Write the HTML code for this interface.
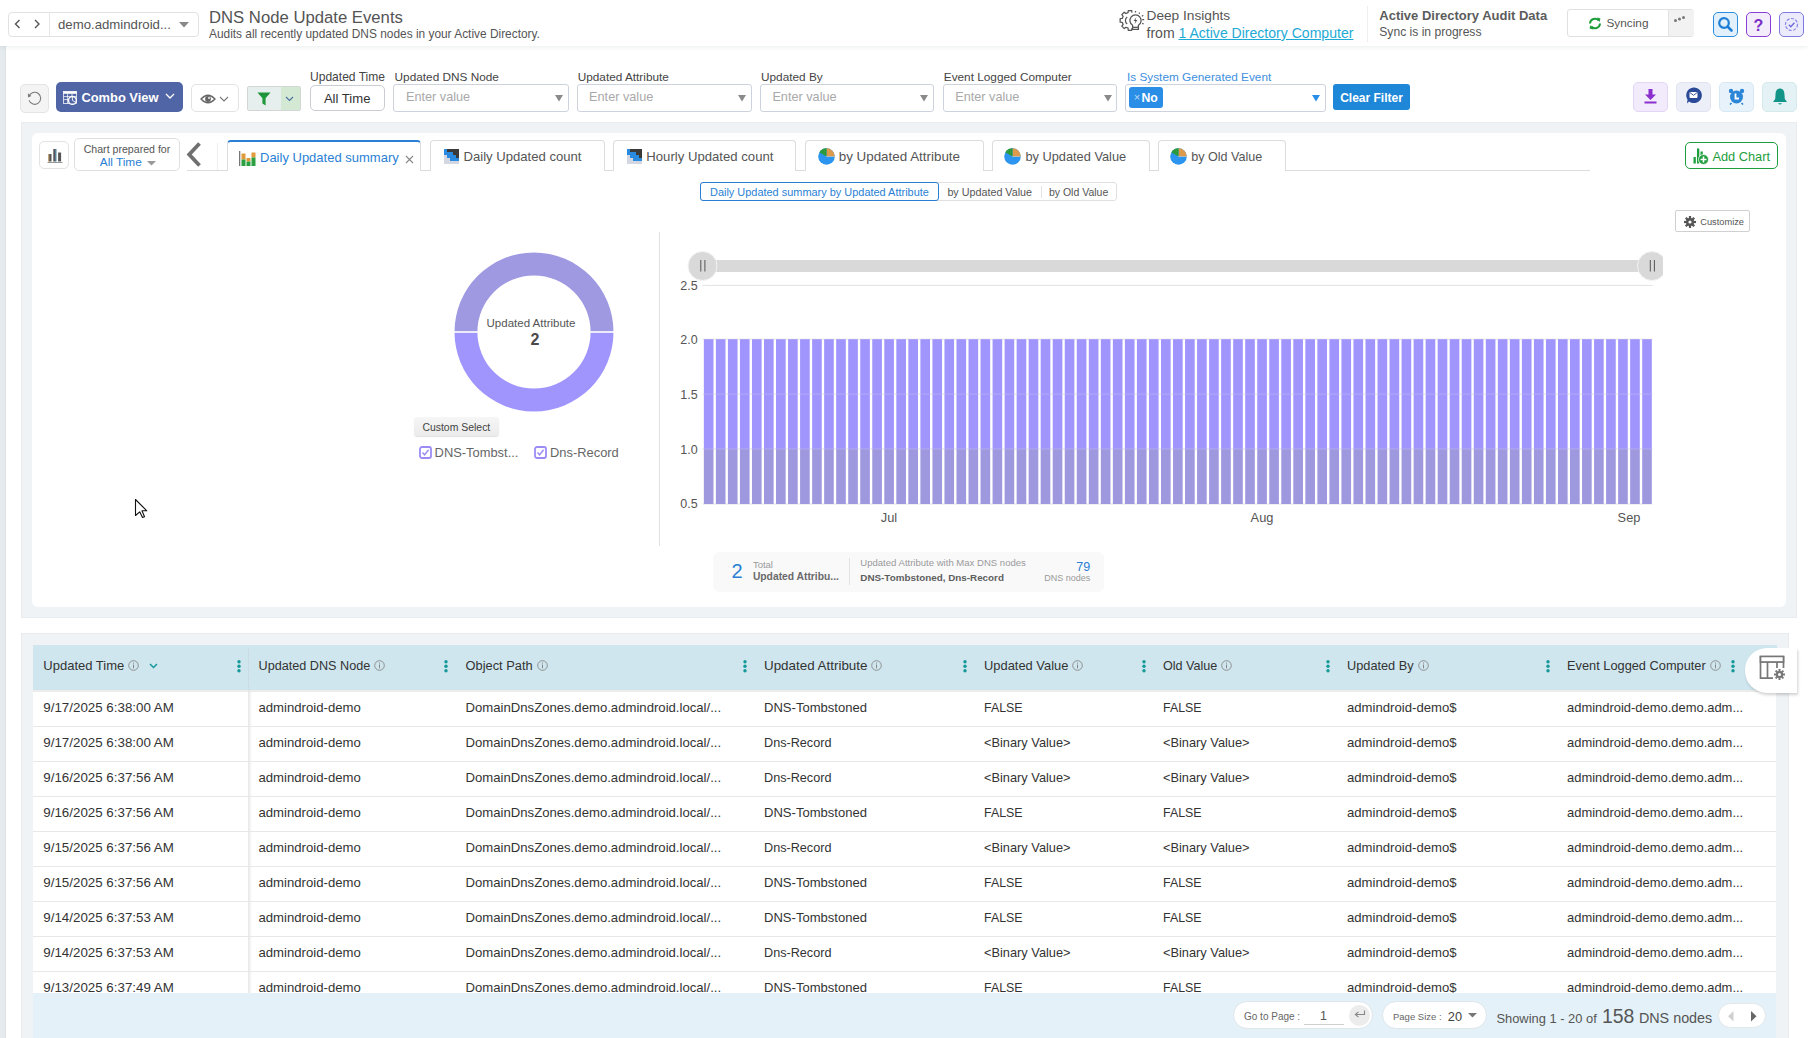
<!DOCTYPE html><html><head><meta charset="utf-8"><title>DNS Node Update Events</title><style>*{margin:0;padding:0}
html,body{width:1808px;height:1038px;overflow:hidden;background:#fff}
body{position:relative;font-family:"Liberation Sans",sans-serif}
.a{position:absolute}
.t{position:absolute;line-height:1;white-space:nowrap}
</style></head><body><div class="a" style="left:0.0px;top:0.0px;width:1808.0px;height:46.0px;background:#fff;box-shadow:0 1px 4px rgba(40,70,80,0.10);z-index:2"></div>
<div style="position:absolute;left:0;top:0;width:1808px;height:46px;z-index:3">
<div class="a" style="left:7.5px;top:11.5px;width:191.0px;height:25.0px;border:1px solid #e2e2e2;border-radius:4px;box-sizing:border-box"></div>
<div class="a" style="left:48.5px;top:12.0px;width:1.0px;height:24.0px;background:#e6e6e6"></div>
<svg class="a" style="left:13.0px;top:18.0px;" width="10" height="12" viewBox="0 0 10 12"><path d="M6.5 2 L2.5 6 L6.5 10" fill="none" stroke="#555" stroke-width="1.4"/></svg>
<svg class="a" style="left:32.0px;top:18.0px;" width="10" height="12" viewBox="0 0 10 12"><path d="M3 2 L7 6 L3 10" fill="none" stroke="#555" stroke-width="1.4"/></svg>
<div class="t" style="left:58.0px;top:18px;font-size:13.2px;color:#555;">demo.admindroid...</div>
<svg class="a" style="left:179.0px;top:22.0px;" width="10" height="6" viewBox="0 0 10 6"><path d="M0 0 L10 0 L5 5.5 Z" fill="#888"/></svg>
<div class="t" style="left:209.0px;top:10px;font-size:16.7px;color:#545454;">DNS Node Update Events</div>
<div class="t" style="left:209.0px;top:29px;font-size:11.9px;color:#555;">Audits all recently updated DNS nodes in your Active Directory.</div>
<svg class="a" style="left:1119.0px;top:9.0px;" width="27" height="23" viewBox="0 0 27 23"><g fill="none" stroke="#555" stroke-width="1.25" stroke-linejoin="round">
<path d="M12.94 3.64 L12.74 1.55 L9.26 1.55 L9.06 3.64 L6.88 4.54 L5.26 3.21 L2.81 5.66 L4.14 7.28 L3.24 9.46 L1.15 9.66 L1.15 13.14 L3.24 13.34 L4.14 15.52 L2.81 17.14 L5.26 19.59 L6.88 18.26 L9.06 19.16 L9.26 21.25 L12.74 21.25 L12.94 19.16"/>
<path d="M8.2 8 A4.3 4.3 0 0 0 8.2 15"/>
<path d="M13.6 16.2 A5.6 5.6 0 1 1 19.4 16.2 L19.4 20.4 H13.6 Z"/><path d="M13.6 18.3 H19.4"/>
<path d="M16.5 2 V3.6 M20.6 3.6 L20.1 4.8 M24.2 6.2 L23 7.2 M23.2 10.6 H25.2 M23.2 14.3 L24.6 14.8"/>
</g><path d="M17.4 8.2 L14.6 12 H16.4 L15.6 14.9 L18.4 11 H16.6 Z" fill="#555"/></svg>
<div class="t" style="left:1146.5px;top:9px;font-size:13.7px;color:#555;">Deep Insights</div>
<div class="t" style="left:1146.5px;top:26px;font-size:14.05px;color:#555;">from <span style="color:#1eaad6;text-decoration:underline;text-underline-offset:1px">1 Active Directory Computer</span></div>
<div class="a" style="left:1366.5px;top:6.0px;width:1.0px;height:36.0px;background:#eee"></div>
<div class="t" style="left:1379.3px;top:9px;font-size:13.0px;color:#5c5c5c;font-weight:700;">Active Directory Audit Data</div>
<div class="t" style="left:1379.3px;top:26px;font-size:12.1px;color:#555;">Sync is in progress</div>
<div class="a" style="left:1567.0px;top:9.0px;width:127.0px;height:28.0px;border:1px solid #e0e0e0;border-radius:3px;box-sizing:border-box"></div>
<div class="a" style="left:1668.0px;top:10.0px;width:25.0px;height:26.0px;background:#f2f2f2;border-left:1px solid #e3e3e3"></div>
<svg class="a" style="left:1673.0px;top:15.0px;" width="14" height="8" viewBox="0 0 14 8"><circle cx="2.5" cy="5.5" r="1.5" fill="#777"/><circle cx="6.5" cy="4" r="1.5" fill="#777"/><circle cx="10.5" cy="2.5" r="1.5" fill="#777"/></svg>
<svg class="a" style="left:1588.0px;top:16.5px;" width="14" height="13" viewBox="0 0 14 13"><g fill="none" stroke="#1e9e3a" stroke-width="2"><path d="M2 6.5 a5 5 0 0 1 8.8 -3"/><path d="M12 6.5 a5 5 0 0 1 -8.8 3"/></g><path d="M9 0.5 l3.5 1 l-1 3.5 z M5 12.5 l-3.5 -1 l1 -3.5 z" fill="#1e9e3a"/></svg>
<div class="t" style="left:1606.5px;top:18px;font-size:11.8px;color:#555;">Syncing</div>
<div class="a" style="left:1713.0px;top:12.0px;width:25.0px;height:25.0px;background:#e1f0fb;border:1px solid #2a8ee0;border-radius:5px;box-sizing:border-box"></div>
<svg class="a" style="left:1717.0px;top:16.0px;" width="17" height="17" viewBox="0 0 17 17"><circle cx="7" cy="7" r="4.8" fill="none" stroke="#1f7fd6" stroke-width="2.2"/><path d="M10.5 10.5 L14.5 14.5" stroke="#1f7fd6" stroke-width="2.6" stroke-linecap="round"/></svg>
<div class="a" style="left:1746.0px;top:12.0px;width:25.0px;height:25.0px;background:#f2ecfb;border:1px solid #8a3fd4;border-radius:5px;box-sizing:border-box"></div>
<div class="t" style="left:1458.5px;width:600px;text-align:center;top:18px;font-size:16px;color:#7b2fc6;font-weight:700;">?</div>
<div class="a" style="left:1779.0px;top:12.0px;width:25.0px;height:25.0px;background:#ecebfb;border:1px solid #7d7be0;border-radius:5px;box-sizing:border-box"></div>
<svg class="a" style="left:1783.0px;top:16.0px;" width="17" height="17" viewBox="0 0 17 17"><circle cx="8.5" cy="8.5" r="6" fill="none" stroke="#8a87e6" stroke-width="1.2" stroke-dasharray="3 1.5"/><path d="M5.8 8.8 l2 2 l3.6 -4" fill="none" stroke="#6b68d8" stroke-width="1.3"/></svg>
</div>
<div class="a" style="left:0.0px;top:46.0px;width:6.0px;height:992.0px;background:#e4eaed;border-right:1px solid #dde1e3;box-sizing:border-box"></div>
<div class="a" style="left:20.0px;top:84.0px;width:28.5px;height:29.0px;background:#f4f4f4;border:1px solid #e4e4e4;border-radius:5px;box-sizing:border-box"></div>
<svg class="a" style="left:27.0px;top:91.0px;" width="15" height="15" viewBox="0 0 15 15"><path d="M2.06 5.25 A6 6 0 1 1 2.06 9.35" fill="none" stroke="#7a7a7a" stroke-width="1.1"/><path d="M0.9 2.3 L4.4 4.9 L1.0 6.4 Z" fill="#7a7a7a"/></svg>
<div class="a" style="left:56.0px;top:82.0px;width:127.0px;height:30.0px;background:#5065a5;border-radius:5px"></div>
<svg class="a" style="left:62.5px;top:90.5px;" width="15" height="14" viewBox="0 0 15 14"><g fill="none" stroke="#fff" stroke-width="0.75"><rect x="0.6" y="0.6" width="12.8" height="11.8"/><path d="M0.6 5.6 H13.4 M0.6 8.6 H13.4 M4.6 3 V12.4 M9 3 V5.6"/></g><rect x="0.4" y="0.4" width="13.2" height="2.4" fill="#fff"/>
<circle cx="9.4" cy="9.4" r="3.9" fill="#5065a5" stroke="#fff" stroke-width="1.4"/><path d="M9.4 9.4 V5.5 M9.4 9.4 L12.6 11.3" stroke="#fff" stroke-width="0.9"/></svg>
<div class="t" style="left:81.4px;top:92px;font-size:12.9px;color:#fff;font-weight:700;">Combo View</div>
<svg class="a" style="left:164.5px;top:93.0px;" width="10" height="7" viewBox="0 0 10 7"><path d="M1 1 L5 5 L9 1" fill="none" stroke="#fff" stroke-width="1.3"/></svg>
<div class="a" style="left:191.0px;top:84.0px;width:48.0px;height:27.5px;background:#fff;border:1px solid #e3e3e3;border-radius:5px;box-sizing:border-box"></div>
<svg class="a" style="left:199.5px;top:94.0px;" width="16" height="10" viewBox="0 0 16 10"><path d="M1 5 Q8 -2.5 15 5 Q8 12.5 1 5 Z" fill="#fff" stroke="#666" stroke-width="1.3"/><circle cx="8" cy="5" r="2.9" fill="#666"/><circle cx="9" cy="4" r="0.9" fill="#fff"/></svg>
<svg class="a" style="left:219.0px;top:95.5px;" width="10" height="7" viewBox="0 0 10 7"><path d="M1 1 L5 5 L9 1" fill="none" stroke="#777" stroke-width="1.1"/></svg>
<div class="a" style="left:247.0px;top:86.0px;width:54.0px;height:24.5px;background:#e7eeee;border:1px solid #d2d6d4;border-radius:2px;box-sizing:border-box"></div>
<div class="a" style="left:280.5px;top:87.0px;width:19.5px;height:22.5px;background:#d4e9d4"></div>
<svg class="a" style="left:256.5px;top:91.5px;" width="14" height="14" viewBox="0 0 14 14"><path d="M0.5 0.5 H13.5 L8.6 6.3 V13.5 L5.4 11.5 V6.3 Z" fill="#1f9a3a"/><path d="M2.5 2.2 H11.5" stroke="#2d6a3a" stroke-width="0.8" stroke-dasharray="1 1"/></svg>
<svg class="a" style="left:285.0px;top:95.5px;" width="9" height="7" viewBox="0 0 9 7"><path d="M1 1 L4.5 4.5 L8 1" fill="none" stroke="#4a6fa0" stroke-width="1.1"/></svg>
<div class="t" style="left:310.0px;top:71px;font-size:12.05px;color:#444;">Updated Time</div>
<div class="a" style="left:310.0px;top:85.0px;width:74.5px;height:25.5px;background:#fff;border:1px solid #c9ccd2;border-radius:5px;box-sizing:border-box"></div>
<div class="t" style="left:47.2px;width:600px;text-align:center;top:92px;font-size:13.1px;color:#333;">All Time</div>
<div class="t" style="left:394.6px;top:72px;font-size:11.8px;color:#444;">Updated DNS Node</div>
<div class="a" style="left:393.4px;top:84.2px;width:175.2px;height:27.6px;background:#fff;border:1px solid #cdd2dc;border-radius:3px;box-sizing:border-box"></div>
<div class="t" style="left:406.0px;top:91px;font-size:12.7px;color:#a9a9a9;">Enter value</div>
<svg class="a" style="left:554.6px;top:95.0px;" width="8" height="7" viewBox="0 0 8 7"><path d="M0 0 H8 L4 6.5 Z" fill="#8a8a8a"/></svg>
<div class="t" style="left:577.7px;top:72px;font-size:11.8px;color:#444;">Updated Attribute</div>
<div class="a" style="left:576.5px;top:84.2px;width:175.0px;height:27.6px;background:#fff;border:1px solid #cdd2dc;border-radius:3px;box-sizing:border-box"></div>
<div class="t" style="left:589.1px;top:91px;font-size:12.7px;color:#a9a9a9;">Enter value</div>
<svg class="a" style="left:737.5px;top:95.0px;" width="8" height="7" viewBox="0 0 8 7"><path d="M0 0 H8 L4 6.5 Z" fill="#8a8a8a"/></svg>
<div class="t" style="left:761.0px;top:72px;font-size:11.8px;color:#444;">Updated By</div>
<div class="a" style="left:759.8px;top:84.2px;width:174.5px;height:27.6px;background:#fff;border:1px solid #cdd2dc;border-radius:3px;box-sizing:border-box"></div>
<div class="t" style="left:772.4px;top:91px;font-size:12.7px;color:#a9a9a9;">Enter value</div>
<svg class="a" style="left:920.3px;top:95.0px;" width="8" height="7" viewBox="0 0 8 7"><path d="M0 0 H8 L4 6.5 Z" fill="#8a8a8a"/></svg>
<div class="t" style="left:943.8px;top:72px;font-size:11.8px;color:#444;">Event Logged Computer</div>
<div class="a" style="left:942.6px;top:84.2px;width:174.9px;height:27.6px;background:#fff;border:1px solid #cdd2dc;border-radius:3px;box-sizing:border-box"></div>
<div class="t" style="left:955.2px;top:91px;font-size:12.7px;color:#a9a9a9;">Enter value</div>
<svg class="a" style="left:1103.5px;top:95.0px;" width="8" height="7" viewBox="0 0 8 7"><path d="M0 0 H8 L4 6.5 Z" fill="#8a8a8a"/></svg>
<div class="t" style="left:1127.0px;top:72px;font-size:11.8px;color:#3d8fe0;">Is System Generated Event</div>
<div class="a" style="left:1125.3px;top:84.2px;width:200.4px;height:27.6px;background:#fff;border:1px solid #cdd2dc;border-radius:3px;box-sizing:border-box"></div>
<div class="a" style="left:1128.8px;top:87.0px;width:34.0px;height:20.8px;background:#2b8ee6;border-radius:3px"></div>
<div class="t" style="left:1133.8px;top:92px;font-size:11px;color:#bcdcf7;">×</div>
<div class="t" style="left:1141.5px;top:92px;font-size:12.2px;color:#fff;font-weight:700;">No</div>
<svg class="a" style="left:1312.0px;top:95.0px;" width="8" height="7" viewBox="0 0 8 7"><path d="M0 0 H8 L4 6.5 Z" fill="#2b8ee6"/></svg>
<div class="a" style="left:1333.0px;top:84.2px;width:76.7px;height:25.5px;background:#1f87d8;border-radius:3px"></div>
<div class="t" style="left:1340.2px;top:92px;font-size:12.0px;color:#fff;font-weight:700;">Clear Filter</div>
<div class="a" style="left:1633.0px;top:82.0px;width:35.0px;height:30.0px;background:#f2ebfc;border:1px solid #e3d6f7;border-radius:5px;box-sizing:border-box"></div>
<svg class="a" style="left:1644.0px;top:89.0px;" width="13" height="15" viewBox="0 0 13 15"><path d="M4.5 0 H8.5 V5.5 H12 L6.5 11 L1 5.5 H4.5 Z" fill="#8b2fce"/><rect x="0.5" y="12.5" width="12" height="2" fill="#8b2fce"/></svg>
<div class="a" style="left:1676.0px;top:82.0px;width:35.0px;height:30.0px;background:#edeff8;border:1px solid #e1e3f1;border-radius:5px;box-sizing:border-box"></div>
<svg class="a" style="left:1685.0px;top:87.0px;" width="17" height="17" viewBox="0 0 17 17"><path d="M8.5 0.5 A8 7.8 0 1 1 4 14.5 L2 16.5 L2.5 12.5 A8 7.8 0 0 1 8.5 0.5 Z" fill="#2b4a98"/><rect x="4.5" y="5" width="8" height="6" rx="1" fill="#fff"/><path d="M4.8 5.5 L8.5 8.3 L12.2 5.5" fill="none" stroke="#2b4a98" stroke-width="0.9"/></svg>
<div class="a" style="left:1719.0px;top:82.0px;width:35.0px;height:30.0px;background:#e8f2fa;border:1px solid #d8e8f3;border-radius:5px;box-sizing:border-box"></div>
<svg class="a" style="left:1728.0px;top:88.0px;" width="17" height="17" viewBox="0 0 17 17"><circle cx="8.5" cy="9" r="6.5" fill="#2b86d8"/><circle cx="3" cy="3" r="2.2" fill="#2b86d8"/><circle cx="14" cy="3" r="2.2" fill="#2b86d8"/><path d="M3.5 15 L2 16.5 M13.5 15 L15 16.5" stroke="#2b86d8" stroke-width="1.6"/><path d="M7.5 5.5 V10.5 H11" fill="none" stroke="#fff" stroke-width="1.8"/></svg>
<div class="a" style="left:1762.0px;top:82.0px;width:34.7px;height:30.0px;background:#e5f2f5;border:1px solid #d6e9ec;border-radius:5px;box-sizing:border-box"></div>
<svg class="a" style="left:1771.5px;top:87.5px;" width="16" height="18" viewBox="0 0 16 18"><path d="M8 0.5 C4.5 0.5 3.5 3.5 3.5 7 L3.2 11 L1 14 H15 L12.8 11 L12.5 7 C12.5 3.5 11.5 0.5 8 0.5 Z" fill="#129488"/><path d="M6 15.2 Q8 17.8 10 15.2 Z" fill="#129488"/></svg>
<div class="a" style="left:21.0px;top:122.0px;width:1776.0px;height:495.5px;background:#eff3f6;border:1px solid #e8ecef;box-sizing:border-box"></div>
<div class="a" style="left:32.0px;top:133.0px;width:1754.0px;height:474.0px;background:#fff;border-radius:6px"></div>
<div class="a" style="left:39.0px;top:141.0px;width:29.5px;height:27.5px;border:1px solid #e3e3e3;border-radius:5px;box-sizing:border-box;background:#fff"></div>
<svg class="a" style="left:46.5px;top:147.0px;" width="16" height="16" viewBox="0 0 16 16"><rect x="1.5" y="7" width="3" height="7.5" fill="#555"/><rect x="6.3" y="2" width="3" height="12.5" fill="#555"/><rect x="11.1" y="5.5" width="3" height="9" fill="#555"/><rect x="0.5" y="15" width="15" height="1" fill="#999"/><rect x="1.5" y="7" width="0.8" height="7.5" fill="#d8a25a"/><rect x="8.5" y="2" width="0.8" height="12.5" fill="#5ab0e0"/></svg>
<div class="a" style="left:74.2px;top:138.4px;width:105.5px;height:33.1px;border:1px solid #e0e0e0;border-radius:5px;box-sizing:border-box;background:#fff"></div>
<div class="t" style="left:83.7px;top:144px;font-size:10.6px;color:#555;">Chart prepared for</div>
<div class="t" style="left:99.8px;top:157px;font-size:11.8px;color:#2a7fd4;">All Time</div>
<svg class="a" style="left:146.5px;top:160.5px;" width="9" height="5" viewBox="0 0 9 5"><path d="M0 0 H9 L4.5 4.5 Z" fill="#999"/></svg>
<svg class="a" style="left:185.0px;top:141.0px;" width="18" height="27" viewBox="0 0 18 27"><path d="M14.5 2.5 L4.2 13.5 L14.5 24.5" fill="none" stroke="#707070" stroke-width="3.8"/></svg>
<div class="a" style="left:217.0px;top:143.0px;width:1.0px;height:27.0px;background:#eee"></div>
<div class="a" style="left:186.5px;top:169.8px;width:1403.5px;height:1.0px;background:#dcdcdc"></div>
<div class="a" style="left:226.8px;top:140.2px;width:194.2px;height:30.6px;background:#fff;border:1px solid #dcdcdc;border-top:2px solid #2a7fd4;border-bottom:none;border-radius:4px 4px 0 0;box-sizing:border-box"></div>
<svg class="a" style="left:238.5px;top:150.5px;" width="17" height="15" viewBox="0 0 17 15"><rect x="0" y="0" width="1.3" height="15" fill="#777"/><rect x="2.5" y="2.5" width="4" height="6" fill="#e09a3a"/><rect x="2.5" y="8.5" width="4" height="6.5" fill="#2aa040"/><rect x="7.5" y="7" width="4" height="3.5" fill="#e09a3a"/><rect x="7.5" y="10.5" width="4" height="4.5" fill="#2aa040"/><rect x="12.5" y="1.5" width="4" height="5" fill="#e09a3a"/><rect x="12.5" y="6.5" width="4" height="8.5" fill="#2aa040"/></svg>
<div class="t" style="left:260.0px;top:151px;font-size:13.0px;color:#2a7fd4;">Daily Updated summary</div>
<svg class="a" style="left:404.5px;top:154.5px;" width="9" height="9" viewBox="0 0 9 9"><path d="M1 1 L8 8 M8 1 L1 8" stroke="#888" stroke-width="1.1"/></svg>
<div class="a" style="left:430.2px;top:140.2px;width:174.6px;height:30.6px;background:#fff;border:1px solid #dcdcdc;border-bottom:none;border-radius:4px 4px 0 0;box-sizing:border-box"></div>
<svg class="a" style="left:444.0px;top:149.0px;" width="15" height="15" viewBox="0 0 15 15"><rect x="0" y="0" width="3" height="3" fill="#2a8ae0"/><rect x="3" y="0" width="3" height="3" fill="#3a3a3a"/><rect x="6" y="0" width="3" height="3" fill="#3a3a3a"/><rect x="9" y="0" width="3" height="3" fill="#3a3a3a"/><rect x="12" y="0" width="3" height="3" fill="#3a3a3a"/><rect x="0" y="3" width="3" height="3" fill="#2a8ae0"/><rect x="3" y="3" width="3" height="3" fill="#2a8ae0"/><rect x="6" y="3" width="3" height="3" fill="#2a8ae0"/><rect x="9" y="3" width="3" height="3" fill="#3a3a3a"/><rect x="12" y="3" width="3" height="3" fill="#3a3a3a"/><rect x="0" y="6" width="3" height="3" fill="#d3d7e2"/><rect x="3" y="6" width="3" height="3" fill="#2a8ae0"/><rect x="6" y="6" width="3" height="3" fill="#2a8ae0"/><rect x="9" y="6" width="3" height="3" fill="#2a8ae0"/><rect x="12" y="6" width="3" height="3" fill="#3a3a3a"/><rect x="0" y="9" width="3" height="3" fill="#d3d7e2"/><rect x="3" y="9" width="3" height="3" fill="#d3d7e2"/><rect x="6" y="9" width="3" height="3" fill="#2a8ae0"/><rect x="9" y="9" width="3" height="3" fill="#2a8ae0"/><rect x="12" y="9" width="3" height="3" fill="#2a8ae0"/><rect x="0" y="12" width="3" height="3" fill="#d3d7e2"/><rect x="3" y="12" width="3" height="3" fill="#d3d7e2"/><rect x="6" y="12" width="3" height="3" fill="#d3d7e2"/><rect x="9" y="12" width="3" height="3" fill="#d3d7e2"/><rect x="12" y="12" width="3" height="3" fill="#d3d7e2"/></svg>
<div class="t" style="left:463.5px;top:150px;font-size:13.1px;color:#555;">Daily Updated count</div>
<div class="a" style="left:613.2px;top:140.2px;width:183.2px;height:30.6px;background:#fff;border:1px solid #dcdcdc;border-bottom:none;border-radius:4px 4px 0 0;box-sizing:border-box"></div>
<svg class="a" style="left:626.8px;top:149.0px;" width="15" height="15" viewBox="0 0 15 15"><rect x="0" y="0" width="3" height="3" fill="#2a8ae0"/><rect x="3" y="0" width="3" height="3" fill="#3a3a3a"/><rect x="6" y="0" width="3" height="3" fill="#3a3a3a"/><rect x="9" y="0" width="3" height="3" fill="#3a3a3a"/><rect x="12" y="0" width="3" height="3" fill="#3a3a3a"/><rect x="0" y="3" width="3" height="3" fill="#2a8ae0"/><rect x="3" y="3" width="3" height="3" fill="#2a8ae0"/><rect x="6" y="3" width="3" height="3" fill="#2a8ae0"/><rect x="9" y="3" width="3" height="3" fill="#3a3a3a"/><rect x="12" y="3" width="3" height="3" fill="#3a3a3a"/><rect x="0" y="6" width="3" height="3" fill="#d3d7e2"/><rect x="3" y="6" width="3" height="3" fill="#2a8ae0"/><rect x="6" y="6" width="3" height="3" fill="#2a8ae0"/><rect x="9" y="6" width="3" height="3" fill="#2a8ae0"/><rect x="12" y="6" width="3" height="3" fill="#3a3a3a"/><rect x="0" y="9" width="3" height="3" fill="#d3d7e2"/><rect x="3" y="9" width="3" height="3" fill="#d3d7e2"/><rect x="6" y="9" width="3" height="3" fill="#2a8ae0"/><rect x="9" y="9" width="3" height="3" fill="#2a8ae0"/><rect x="12" y="9" width="3" height="3" fill="#2a8ae0"/><rect x="0" y="12" width="3" height="3" fill="#d3d7e2"/><rect x="3" y="12" width="3" height="3" fill="#d3d7e2"/><rect x="6" y="12" width="3" height="3" fill="#d3d7e2"/><rect x="9" y="12" width="3" height="3" fill="#d3d7e2"/><rect x="12" y="12" width="3" height="3" fill="#d3d7e2"/></svg>
<div class="t" style="left:646.3px;top:150px;font-size:13.15px;color:#555;">Hourly Updated count</div>
<div class="a" style="left:805.0px;top:140.2px;width:178.6px;height:30.6px;background:#fff;border:1px solid #dcdcdc;border-bottom:none;border-radius:4px 4px 0 0;box-sizing:border-box"></div>
<svg class="a" style="left:817.7px;top:148.0px;" width="17" height="17" viewBox="0 0 17 17"><circle cx="8.5" cy="8.5" r="8.3" fill="#2b95ef"/><path d="M8.5 8.5 V0.2 A8.3 8.3 0 0 1 16.8 8.5 Z" fill="#dc9a4a"/><path d="M8.5 8.5 L1.3 4.3 A8.3 8.3 0 0 1 8.5 0.2 Z" fill="#2c9a3c"/><path d="M8.5 8.5 H16.8" stroke="#fff" stroke-width="0.7" stroke-dasharray="1 1"/></svg>
<div class="t" style="left:838.7px;top:150px;font-size:13.4px;color:#555;">by Updated Attribute</div>
<div class="a" style="left:992.2px;top:140.2px;width:157.6px;height:30.6px;background:#fff;border:1px solid #dcdcdc;border-bottom:none;border-radius:4px 4px 0 0;box-sizing:border-box"></div>
<svg class="a" style="left:1004.4px;top:148.0px;" width="17" height="17" viewBox="0 0 17 17"><circle cx="8.5" cy="8.5" r="8.3" fill="#2b95ef"/><path d="M8.5 8.5 V0.2 A8.3 8.3 0 0 1 16.8 8.5 Z" fill="#dc9a4a"/><path d="M8.5 8.5 L1.3 4.3 A8.3 8.3 0 0 1 8.5 0.2 Z" fill="#2c9a3c"/><path d="M8.5 8.5 H16.8" stroke="#fff" stroke-width="0.7" stroke-dasharray="1 1"/></svg>
<div class="t" style="left:1025.4px;top:151px;font-size:12.8px;color:#555;">by Updated Value</div>
<div class="a" style="left:1158.0px;top:140.2px;width:128.0px;height:30.6px;background:#fff;border:1px solid #dcdcdc;border-bottom:none;border-radius:4px 4px 0 0;box-sizing:border-box"></div>
<svg class="a" style="left:1170.3px;top:148.0px;" width="17" height="17" viewBox="0 0 17 17"><circle cx="8.5" cy="8.5" r="8.3" fill="#2b95ef"/><path d="M8.5 8.5 V0.2 A8.3 8.3 0 0 1 16.8 8.5 Z" fill="#dc9a4a"/><path d="M8.5 8.5 L1.3 4.3 A8.3 8.3 0 0 1 8.5 0.2 Z" fill="#2c9a3c"/><path d="M8.5 8.5 H16.8" stroke="#fff" stroke-width="0.7" stroke-dasharray="1 1"/></svg>
<div class="t" style="left:1191.3px;top:151px;font-size:12.55px;color:#555;">by Old Value</div>
<div class="a" style="left:1685.0px;top:142.0px;width:93.0px;height:27.0px;border:1.5px solid #1f9e3e;border-radius:5px;box-sizing:border-box;background:#fff"></div>
<svg class="a" style="left:1693.0px;top:148.0px;" width="16" height="17" viewBox="0 0 16 17"><rect x="0.5" y="9" width="2.3" height="6.5" fill="#1f9e3e"/><rect x="4" y="0.5" width="2.3" height="15" fill="#1f9e3e"/><rect x="7.5" y="3.5" width="2.3" height="6" fill="#1f9e3e"/><circle cx="10.5" cy="11.5" r="5" fill="#1f9e3e" stroke="#fff" stroke-width="0.8"/><path d="M10.5 8.5 V14.5 M7.5 11.5 H13.5" stroke="#fff" stroke-width="1.6"/></svg>
<div class="t" style="left:1712.4px;top:151px;font-size:12.8px;color:#1f9e3e;">Add Chart</div>
<div class="a" style="left:700.2px;top:182.3px;width:417.3px;height:19.0px;border:1px solid #e0e0e0;border-radius:3px;box-sizing:border-box"></div>
<div class="a" style="left:700.2px;top:182.3px;width:239.3px;height:19.0px;border:1.3px solid #2a7fd4;border-radius:3px;box-sizing:border-box"></div>
<div class="a" style="left:1041.2px;top:186.0px;width:1.0px;height:12.0px;background:#e3e3e3"></div>
<div class="t" style="left:710.0px;top:187px;font-size:10.95px;color:#2a7fd4;">Daily Updated summary by Updated Attribute</div>
<div class="t" style="left:947.4px;top:187px;font-size:10.75px;color:#555;">by Updated Value</div>
<div class="t" style="left:1048.9px;top:187px;font-size:10.5px;color:#555;">by Old Value</div>
<div class="a" style="left:1675.2px;top:210.2px;width:74.6px;height:21.4px;border:1px solid #d0d0d0;border-radius:2px;box-sizing:border-box;background:#fff"></div>
<svg class="a" style="left:1683.5px;top:215.5px;" width="12" height="12" viewBox="0 0 12 12"><g fill="#555"><circle cx="6" cy="6" r="4"/><rect x="4.9" y="0" width="2.2" height="3" transform="rotate(0 6 6)"/><rect x="4.9" y="0" width="2.2" height="3" transform="rotate(45 6 6)"/><rect x="4.9" y="0" width="2.2" height="3" transform="rotate(90 6 6)"/><rect x="4.9" y="0" width="2.2" height="3" transform="rotate(135 6 6)"/><rect x="4.9" y="0" width="2.2" height="3" transform="rotate(180 6 6)"/><rect x="4.9" y="0" width="2.2" height="3" transform="rotate(225 6 6)"/><rect x="4.9" y="0" width="2.2" height="3" transform="rotate(270 6 6)"/><rect x="4.9" y="0" width="2.2" height="3" transform="rotate(315 6 6)"/></g><circle cx="6" cy="6" r="1.6" fill="#fff"/></svg>
<div class="t" style="left:1700.3px;top:218px;font-size:9.25px;color:#555;">Customize</div>
<svg class="a" style="left:0;top:0" width="1808" height="1038"><path d="M454.50 332.00 A79.5 79.5 0 0 1 613.50 332.00 L590.60 332.00 A56.6 56.6 0 0 0 477.40 332.00 Z" fill="#9f99e2"/><path d="M613.50 332.00 A79.5 79.5 0 0 1 454.50 332.00 L477.40 332.00 A56.6 56.6 0 0 0 590.60 332.00 Z" fill="#a095fd"/><rect x="453.5" y="331.2" width="161.0" height="1.6" fill="#fff"/></svg>
<div class="t" style="left:231.0px;width:600px;text-align:center;top:318px;font-size:11.5px;color:#555;">Updated Attribute</div>
<div class="t" style="left:235.0px;width:600px;text-align:center;top:332px;font-size:16px;color:#4a4a4a;font-weight:700;">2</div>
<div class="a" style="left:414.0px;top:417.2px;width:84.6px;height:19.3px;background:linear-gradient(#f6f6f6,#ebebeb);border-radius:3px;box-shadow:0 1px 1px rgba(0,0,0,0.12)"></div>
<div class="t" style="left:422.4px;top:423px;font-size:10.45px;color:#444;">Custom Select</div>
<svg class="a" style="left:419.0px;top:446.0px;" width="13" height="13" viewBox="0 0 13 13"><rect x="1" y="1" width="11" height="11" rx="2" fill="#fff" stroke="#9b8cf5" stroke-width="1.8"/><path d="M3.5 6.5 L5.6 8.8 L9.6 3.8" fill="none" stroke="#9b8cf5" stroke-width="1.4"/></svg>
<div class="t" style="left:434.6px;top:447px;font-size:12.9px;color:#666;">DNS-Tombst...</div>
<svg class="a" style="left:534.0px;top:446.0px;" width="13" height="13" viewBox="0 0 13 13"><rect x="1" y="1" width="11" height="11" rx="2" fill="#fff" stroke="#9b8cf5" stroke-width="1.8"/><path d="M3.5 6.5 L5.6 8.8 L9.6 3.8" fill="none" stroke="#9b8cf5" stroke-width="1.4"/></svg>
<div class="t" style="left:550.0px;top:447px;font-size:12.9px;color:#666;">Dns-Record</div>
<div class="a" style="left:659.2px;top:232.0px;width:1.0px;height:314.0px;background:#e2e2e2"></div>
<svg class="a" style="left:0;top:0" width="1808" height="1038"><rect x="702.5" y="284.9" width="950" height="1" fill="#e3e3e3"/><rect x="702.5" y="338.7" width="950" height="1" fill="#e3e3e3"/><rect x="702.5" y="393.6" width="950" height="1" fill="#e3e3e3"/><rect x="702.5" y="448.5" width="950" height="1" fill="#e3e3e3"/><rect x="702.5" y="503.5" width="950" height="1" fill="#e3e3e3"/><rect x="703.85" y="339.2" width="9.63" height="109.8" fill="#a094fd"/><rect x="703.85" y="449" width="9.63" height="55" fill="#9e98de"/><rect x="715.88" y="339.2" width="9.63" height="109.8" fill="#a094fd"/><rect x="715.88" y="449" width="9.63" height="55" fill="#9e98de"/><rect x="727.91" y="339.2" width="9.63" height="109.8" fill="#a094fd"/><rect x="727.91" y="449" width="9.63" height="55" fill="#9e98de"/><rect x="739.94" y="339.2" width="9.63" height="109.8" fill="#a094fd"/><rect x="739.94" y="449" width="9.63" height="55" fill="#9e98de"/><rect x="751.97" y="339.2" width="9.63" height="109.8" fill="#a094fd"/><rect x="751.97" y="449" width="9.63" height="55" fill="#9e98de"/><rect x="764.00" y="339.2" width="9.63" height="109.8" fill="#a094fd"/><rect x="764.00" y="449" width="9.63" height="55" fill="#9e98de"/><rect x="776.03" y="339.2" width="9.63" height="109.8" fill="#a094fd"/><rect x="776.03" y="449" width="9.63" height="55" fill="#9e98de"/><rect x="788.06" y="339.2" width="9.63" height="109.8" fill="#a094fd"/><rect x="788.06" y="449" width="9.63" height="55" fill="#9e98de"/><rect x="800.09" y="339.2" width="9.63" height="109.8" fill="#a094fd"/><rect x="800.09" y="449" width="9.63" height="55" fill="#9e98de"/><rect x="812.12" y="339.2" width="9.63" height="109.8" fill="#a094fd"/><rect x="812.12" y="449" width="9.63" height="55" fill="#9e98de"/><rect x="824.15" y="339.2" width="9.63" height="109.8" fill="#a094fd"/><rect x="824.15" y="449" width="9.63" height="55" fill="#9e98de"/><rect x="836.18" y="339.2" width="9.63" height="109.8" fill="#a094fd"/><rect x="836.18" y="449" width="9.63" height="55" fill="#9e98de"/><rect x="848.21" y="339.2" width="9.63" height="109.8" fill="#a094fd"/><rect x="848.21" y="449" width="9.63" height="55" fill="#9e98de"/><rect x="860.24" y="339.2" width="9.63" height="109.8" fill="#a094fd"/><rect x="860.24" y="449" width="9.63" height="55" fill="#9e98de"/><rect x="872.27" y="339.2" width="9.63" height="109.8" fill="#a094fd"/><rect x="872.27" y="449" width="9.63" height="55" fill="#9e98de"/><rect x="884.30" y="339.2" width="9.63" height="109.8" fill="#a094fd"/><rect x="884.30" y="449" width="9.63" height="55" fill="#9e98de"/><rect x="896.33" y="339.2" width="9.63" height="109.8" fill="#a094fd"/><rect x="896.33" y="449" width="9.63" height="55" fill="#9e98de"/><rect x="908.36" y="339.2" width="9.63" height="109.8" fill="#a094fd"/><rect x="908.36" y="449" width="9.63" height="55" fill="#9e98de"/><rect x="920.39" y="339.2" width="9.63" height="109.8" fill="#a094fd"/><rect x="920.39" y="449" width="9.63" height="55" fill="#9e98de"/><rect x="932.42" y="339.2" width="9.63" height="109.8" fill="#a094fd"/><rect x="932.42" y="449" width="9.63" height="55" fill="#9e98de"/><rect x="944.45" y="339.2" width="9.63" height="109.8" fill="#a094fd"/><rect x="944.45" y="449" width="9.63" height="55" fill="#9e98de"/><rect x="956.48" y="339.2" width="9.63" height="109.8" fill="#a094fd"/><rect x="956.48" y="449" width="9.63" height="55" fill="#9e98de"/><rect x="968.51" y="339.2" width="9.63" height="109.8" fill="#a094fd"/><rect x="968.51" y="449" width="9.63" height="55" fill="#9e98de"/><rect x="980.54" y="339.2" width="9.63" height="109.8" fill="#a094fd"/><rect x="980.54" y="449" width="9.63" height="55" fill="#9e98de"/><rect x="992.57" y="339.2" width="9.63" height="109.8" fill="#a094fd"/><rect x="992.57" y="449" width="9.63" height="55" fill="#9e98de"/><rect x="1004.60" y="339.2" width="9.63" height="109.8" fill="#a094fd"/><rect x="1004.60" y="449" width="9.63" height="55" fill="#9e98de"/><rect x="1016.63" y="339.2" width="9.63" height="109.8" fill="#a094fd"/><rect x="1016.63" y="449" width="9.63" height="55" fill="#9e98de"/><rect x="1028.66" y="339.2" width="9.63" height="109.8" fill="#a094fd"/><rect x="1028.66" y="449" width="9.63" height="55" fill="#9e98de"/><rect x="1040.69" y="339.2" width="9.63" height="109.8" fill="#a094fd"/><rect x="1040.69" y="449" width="9.63" height="55" fill="#9e98de"/><rect x="1052.72" y="339.2" width="9.63" height="109.8" fill="#a094fd"/><rect x="1052.72" y="449" width="9.63" height="55" fill="#9e98de"/><rect x="1064.75" y="339.2" width="9.63" height="109.8" fill="#a094fd"/><rect x="1064.75" y="449" width="9.63" height="55" fill="#9e98de"/><rect x="1076.78" y="339.2" width="9.63" height="109.8" fill="#a094fd"/><rect x="1076.78" y="449" width="9.63" height="55" fill="#9e98de"/><rect x="1088.81" y="339.2" width="9.63" height="109.8" fill="#a094fd"/><rect x="1088.81" y="449" width="9.63" height="55" fill="#9e98de"/><rect x="1100.84" y="339.2" width="9.63" height="109.8" fill="#a094fd"/><rect x="1100.84" y="449" width="9.63" height="55" fill="#9e98de"/><rect x="1112.87" y="339.2" width="9.63" height="109.8" fill="#a094fd"/><rect x="1112.87" y="449" width="9.63" height="55" fill="#9e98de"/><rect x="1124.90" y="339.2" width="9.63" height="109.8" fill="#a094fd"/><rect x="1124.90" y="449" width="9.63" height="55" fill="#9e98de"/><rect x="1136.93" y="339.2" width="9.63" height="109.8" fill="#a094fd"/><rect x="1136.93" y="449" width="9.63" height="55" fill="#9e98de"/><rect x="1148.96" y="339.2" width="9.63" height="109.8" fill="#a094fd"/><rect x="1148.96" y="449" width="9.63" height="55" fill="#9e98de"/><rect x="1160.99" y="339.2" width="9.63" height="109.8" fill="#a094fd"/><rect x="1160.99" y="449" width="9.63" height="55" fill="#9e98de"/><rect x="1173.02" y="339.2" width="9.63" height="109.8" fill="#a094fd"/><rect x="1173.02" y="449" width="9.63" height="55" fill="#9e98de"/><rect x="1185.05" y="339.2" width="9.63" height="109.8" fill="#a094fd"/><rect x="1185.05" y="449" width="9.63" height="55" fill="#9e98de"/><rect x="1197.08" y="339.2" width="9.63" height="109.8" fill="#a094fd"/><rect x="1197.08" y="449" width="9.63" height="55" fill="#9e98de"/><rect x="1209.11" y="339.2" width="9.63" height="109.8" fill="#a094fd"/><rect x="1209.11" y="449" width="9.63" height="55" fill="#9e98de"/><rect x="1221.14" y="339.2" width="9.63" height="109.8" fill="#a094fd"/><rect x="1221.14" y="449" width="9.63" height="55" fill="#9e98de"/><rect x="1233.17" y="339.2" width="9.63" height="109.8" fill="#a094fd"/><rect x="1233.17" y="449" width="9.63" height="55" fill="#9e98de"/><rect x="1245.20" y="339.2" width="9.63" height="109.8" fill="#a094fd"/><rect x="1245.20" y="449" width="9.63" height="55" fill="#9e98de"/><rect x="1257.23" y="339.2" width="9.63" height="109.8" fill="#a094fd"/><rect x="1257.23" y="449" width="9.63" height="55" fill="#9e98de"/><rect x="1269.26" y="339.2" width="9.63" height="109.8" fill="#a094fd"/><rect x="1269.26" y="449" width="9.63" height="55" fill="#9e98de"/><rect x="1281.29" y="339.2" width="9.63" height="109.8" fill="#a094fd"/><rect x="1281.29" y="449" width="9.63" height="55" fill="#9e98de"/><rect x="1293.32" y="339.2" width="9.63" height="109.8" fill="#a094fd"/><rect x="1293.32" y="449" width="9.63" height="55" fill="#9e98de"/><rect x="1305.35" y="339.2" width="9.63" height="109.8" fill="#a094fd"/><rect x="1305.35" y="449" width="9.63" height="55" fill="#9e98de"/><rect x="1317.38" y="339.2" width="9.63" height="109.8" fill="#a094fd"/><rect x="1317.38" y="449" width="9.63" height="55" fill="#9e98de"/><rect x="1329.41" y="339.2" width="9.63" height="109.8" fill="#a094fd"/><rect x="1329.41" y="449" width="9.63" height="55" fill="#9e98de"/><rect x="1341.44" y="339.2" width="9.63" height="109.8" fill="#a094fd"/><rect x="1341.44" y="449" width="9.63" height="55" fill="#9e98de"/><rect x="1353.47" y="339.2" width="9.63" height="109.8" fill="#a094fd"/><rect x="1353.47" y="449" width="9.63" height="55" fill="#9e98de"/><rect x="1365.50" y="339.2" width="9.63" height="109.8" fill="#a094fd"/><rect x="1365.50" y="449" width="9.63" height="55" fill="#9e98de"/><rect x="1377.53" y="339.2" width="9.63" height="109.8" fill="#a094fd"/><rect x="1377.53" y="449" width="9.63" height="55" fill="#9e98de"/><rect x="1389.56" y="339.2" width="9.63" height="109.8" fill="#a094fd"/><rect x="1389.56" y="449" width="9.63" height="55" fill="#9e98de"/><rect x="1401.59" y="339.2" width="9.63" height="109.8" fill="#a094fd"/><rect x="1401.59" y="449" width="9.63" height="55" fill="#9e98de"/><rect x="1413.62" y="339.2" width="9.63" height="109.8" fill="#a094fd"/><rect x="1413.62" y="449" width="9.63" height="55" fill="#9e98de"/><rect x="1425.65" y="339.2" width="9.63" height="109.8" fill="#a094fd"/><rect x="1425.65" y="449" width="9.63" height="55" fill="#9e98de"/><rect x="1437.68" y="339.2" width="9.63" height="109.8" fill="#a094fd"/><rect x="1437.68" y="449" width="9.63" height="55" fill="#9e98de"/><rect x="1449.71" y="339.2" width="9.63" height="109.8" fill="#a094fd"/><rect x="1449.71" y="449" width="9.63" height="55" fill="#9e98de"/><rect x="1461.74" y="339.2" width="9.63" height="109.8" fill="#a094fd"/><rect x="1461.74" y="449" width="9.63" height="55" fill="#9e98de"/><rect x="1473.77" y="339.2" width="9.63" height="109.8" fill="#a094fd"/><rect x="1473.77" y="449" width="9.63" height="55" fill="#9e98de"/><rect x="1485.80" y="339.2" width="9.63" height="109.8" fill="#a094fd"/><rect x="1485.80" y="449" width="9.63" height="55" fill="#9e98de"/><rect x="1497.83" y="339.2" width="9.63" height="109.8" fill="#a094fd"/><rect x="1497.83" y="449" width="9.63" height="55" fill="#9e98de"/><rect x="1509.86" y="339.2" width="9.63" height="109.8" fill="#a094fd"/><rect x="1509.86" y="449" width="9.63" height="55" fill="#9e98de"/><rect x="1521.89" y="339.2" width="9.63" height="109.8" fill="#a094fd"/><rect x="1521.89" y="449" width="9.63" height="55" fill="#9e98de"/><rect x="1533.92" y="339.2" width="9.63" height="109.8" fill="#a094fd"/><rect x="1533.92" y="449" width="9.63" height="55" fill="#9e98de"/><rect x="1545.95" y="339.2" width="9.63" height="109.8" fill="#a094fd"/><rect x="1545.95" y="449" width="9.63" height="55" fill="#9e98de"/><rect x="1557.98" y="339.2" width="9.63" height="109.8" fill="#a094fd"/><rect x="1557.98" y="449" width="9.63" height="55" fill="#9e98de"/><rect x="1570.01" y="339.2" width="9.63" height="109.8" fill="#a094fd"/><rect x="1570.01" y="449" width="9.63" height="55" fill="#9e98de"/><rect x="1582.04" y="339.2" width="9.63" height="109.8" fill="#a094fd"/><rect x="1582.04" y="449" width="9.63" height="55" fill="#9e98de"/><rect x="1594.07" y="339.2" width="9.63" height="109.8" fill="#a094fd"/><rect x="1594.07" y="449" width="9.63" height="55" fill="#9e98de"/><rect x="1606.10" y="339.2" width="9.63" height="109.8" fill="#a094fd"/><rect x="1606.10" y="449" width="9.63" height="55" fill="#9e98de"/><rect x="1618.13" y="339.2" width="9.63" height="109.8" fill="#a094fd"/><rect x="1618.13" y="449" width="9.63" height="55" fill="#9e98de"/><rect x="1630.16" y="339.2" width="9.63" height="109.8" fill="#a094fd"/><rect x="1630.16" y="449" width="9.63" height="55" fill="#9e98de"/><rect x="1642.19" y="339.2" width="9.63" height="109.8" fill="#a094fd"/><rect x="1642.19" y="449" width="9.63" height="55" fill="#9e98de"/><rect x="702.5" y="393.6" width="950" height="1" fill="rgba(230,230,230,0.25)"/><rect x="702.5" y="448.5" width="950" height="1" fill="rgba(230,230,230,0.25)"/><rect x="703" y="260" width="949" height="12" fill="#d9d9d9"/><clipPath id="clipc"><rect x="660" y="240" width="1003" height="60"/></clipPath><circle cx="702.5" cy="266" r="14.5" fill="#d9d9d9" stroke="#f4f4f4" stroke-width="1" clip-path="url(#clipc)"/><rect x="700.3" y="260" width="1" height="11.5" fill="#555"/><rect x="704.4" y="260" width="1" height="11.5" fill="#555"/><circle cx="1652" cy="266" r="14.5" fill="#d9d9d9" stroke="#f4f4f4" stroke-width="1" clip-path="url(#clipc)"/><rect x="1649.8" y="260" width="1" height="11.5" fill="#555"/><rect x="1653.9" y="260" width="1" height="11.5" fill="#555"/></svg>
<div class="t" style="left:97.6px;width:600px;text-align:right;top:280px;font-size:12.5px;color:#555;">2.5</div>
<div class="t" style="left:97.6px;width:600px;text-align:right;top:334px;font-size:12.5px;color:#555;">2.0</div>
<div class="t" style="left:97.6px;width:600px;text-align:right;top:389px;font-size:12.5px;color:#555;">1.5</div>
<div class="t" style="left:97.6px;width:600px;text-align:right;top:444px;font-size:12.5px;color:#555;">1.0</div>
<div class="t" style="left:97.6px;width:600px;text-align:right;top:498px;font-size:12.5px;color:#555;">0.5</div>
<div class="t" style="left:589.0px;width:600px;text-align:center;top:512px;font-size:12.8px;color:#555;">Jul</div>
<div class="t" style="left:962.0px;width:600px;text-align:center;top:512px;font-size:12.8px;color:#555;">Aug</div>
<div class="t" style="left:1329.0px;width:600px;text-align:center;top:512px;font-size:12.8px;color:#555;">Sep</div>
<div class="a" style="left:713.0px;top:552.0px;width:391.0px;height:39.5px;background:#f9f9fa;border-radius:6px"></div>
<div class="t" style="left:731.5px;top:561px;font-size:20px;color:#2a7fd4;">2</div>
<div class="t" style="left:752.9px;top:560px;font-size:9.5px;color:#999;">Total</div>
<div class="t" style="left:752.9px;top:572px;font-size:10.3px;color:#6a6a6a;font-weight:700;">Updated Attribu...</div>
<div class="a" style="left:849.2px;top:558.0px;width:1.0px;height:27.4px;background:#e2e2e2"></div>
<div class="t" style="left:860.3px;top:558px;font-size:9.55px;color:#9a9a9a;">Updated Attribute with Max DNS nodes</div>
<div class="t" style="left:860.3px;top:573px;font-size:9.85px;color:#5e5e5e;font-weight:700;">DNS-Tombstoned, Dns-Record</div>
<div class="t" style="left:490.2px;width:600px;text-align:right;top:561px;font-size:12.5px;color:#2a7fd4;">79</div>
<div class="t" style="left:490.2px;width:600px;text-align:right;top:574px;font-size:9.0px;color:#999;">DNS nodes</div>
<div class="a" style="left:21.0px;top:633.0px;width:1768.0px;height:407.0px;background:#eff3f6;border:1px solid #e8ecef;box-sizing:border-box"></div>
<div class="a" style="left:33.0px;top:645.0px;width:1744.0px;height:45.3px;background:#cfe6ee"></div>
<div class="a" style="left:33.0px;top:690.3px;width:1743.3px;height:302.7px;background:#fff"></div>
<div class="a" style="left:33.0px;top:690.0px;width:1744.0px;height:2.0px;background:#ececec"></div>
<div class="t" style="left:43.3px;top:659px;font-size:13.0px;color:#333;">Updated Time<svg width="11" height="11" viewBox="0 0 11 11" style="margin-left:4px;vertical-align:-1px"><circle cx="5.5" cy="5.5" r="4.8" fill="none" stroke="#888" stroke-width="0.9"/><rect x="5" y="4.5" width="1" height="3.8" fill="#888"/><rect x="5" y="2.6" width="1" height="1" fill="#888"/></svg></div>
<svg class="a" style="left:237.3px;top:658.0px;" width="4" height="16" viewBox="0 0 4 16"><circle cx="2" cy="3.7" r="1.7" fill="#13999a"/><circle cx="2" cy="8.2" r="1.7" fill="#13999a"/><circle cx="2" cy="12.7" r="1.7" fill="#13999a"/></svg>
<div class="t" style="left:258.5px;top:660px;font-size:12.65px;color:#333;">Updated DNS Node<svg width="11" height="11" viewBox="0 0 11 11" style="margin-left:4px;vertical-align:-1px"><circle cx="5.5" cy="5.5" r="4.8" fill="none" stroke="#888" stroke-width="0.9"/><rect x="5" y="4.5" width="1" height="3.8" fill="#888"/><rect x="5" y="2.6" width="1" height="1" fill="#888"/></svg></div>
<svg class="a" style="left:444.0px;top:658.0px;" width="4" height="16" viewBox="0 0 4 16"><circle cx="2" cy="3.7" r="1.7" fill="#13999a"/><circle cx="2" cy="8.2" r="1.7" fill="#13999a"/><circle cx="2" cy="12.7" r="1.7" fill="#13999a"/></svg>
<div class="t" style="left:465.5px;top:660px;font-size:12.85px;color:#333;">Object Path<svg width="11" height="11" viewBox="0 0 11 11" style="margin-left:4px;vertical-align:-1px"><circle cx="5.5" cy="5.5" r="4.8" fill="none" stroke="#888" stroke-width="0.9"/><rect x="5" y="4.5" width="1" height="3.8" fill="#888"/><rect x="5" y="2.6" width="1" height="1" fill="#888"/></svg></div>
<svg class="a" style="left:743.4px;top:658.0px;" width="4" height="16" viewBox="0 0 4 16"><circle cx="2" cy="3.7" r="1.7" fill="#13999a"/><circle cx="2" cy="8.2" r="1.7" fill="#13999a"/><circle cx="2" cy="12.7" r="1.7" fill="#13999a"/></svg>
<div class="t" style="left:764.0px;top:659px;font-size:13.4px;color:#333;">Updated Attribute<svg width="11" height="11" viewBox="0 0 11 11" style="margin-left:4px;vertical-align:-1px"><circle cx="5.5" cy="5.5" r="4.8" fill="none" stroke="#888" stroke-width="0.9"/><rect x="5" y="4.5" width="1" height="3.8" fill="#888"/><rect x="5" y="2.6" width="1" height="1" fill="#888"/></svg></div>
<svg class="a" style="left:963.0px;top:658.0px;" width="4" height="16" viewBox="0 0 4 16"><circle cx="2" cy="3.7" r="1.7" fill="#13999a"/><circle cx="2" cy="8.2" r="1.7" fill="#13999a"/><circle cx="2" cy="12.7" r="1.7" fill="#13999a"/></svg>
<div class="t" style="left:984.0px;top:660px;font-size:12.9px;color:#333;">Updated Value<svg width="11" height="11" viewBox="0 0 11 11" style="margin-left:4px;vertical-align:-1px"><circle cx="5.5" cy="5.5" r="4.8" fill="none" stroke="#888" stroke-width="0.9"/><rect x="5" y="4.5" width="1" height="3.8" fill="#888"/><rect x="5" y="2.6" width="1" height="1" fill="#888"/></svg></div>
<svg class="a" style="left:1142.0px;top:658.0px;" width="4" height="16" viewBox="0 0 4 16"><circle cx="2" cy="3.7" r="1.7" fill="#13999a"/><circle cx="2" cy="8.2" r="1.7" fill="#13999a"/><circle cx="2" cy="12.7" r="1.7" fill="#13999a"/></svg>
<div class="t" style="left:1163.0px;top:660px;font-size:12.6px;color:#333;">Old Value<svg width="11" height="11" viewBox="0 0 11 11" style="margin-left:4px;vertical-align:-1px"><circle cx="5.5" cy="5.5" r="4.8" fill="none" stroke="#888" stroke-width="0.9"/><rect x="5" y="4.5" width="1" height="3.8" fill="#888"/><rect x="5" y="2.6" width="1" height="1" fill="#888"/></svg></div>
<svg class="a" style="left:1326.0px;top:658.0px;" width="4" height="16" viewBox="0 0 4 16"><circle cx="2" cy="3.7" r="1.7" fill="#13999a"/><circle cx="2" cy="8.2" r="1.7" fill="#13999a"/><circle cx="2" cy="12.7" r="1.7" fill="#13999a"/></svg>
<div class="t" style="left:1347.0px;top:660px;font-size:12.75px;color:#333;">Updated By<svg width="11" height="11" viewBox="0 0 11 11" style="margin-left:4px;vertical-align:-1px"><circle cx="5.5" cy="5.5" r="4.8" fill="none" stroke="#888" stroke-width="0.9"/><rect x="5" y="4.5" width="1" height="3.8" fill="#888"/><rect x="5" y="2.6" width="1" height="1" fill="#888"/></svg></div>
<svg class="a" style="left:1546.0px;top:658.0px;" width="4" height="16" viewBox="0 0 4 16"><circle cx="2" cy="3.7" r="1.7" fill="#13999a"/><circle cx="2" cy="8.2" r="1.7" fill="#13999a"/><circle cx="2" cy="12.7" r="1.7" fill="#13999a"/></svg>
<div class="t" style="left:1567.0px;top:660px;font-size:12.8px;color:#333;">Event Logged Computer<svg width="11" height="11" viewBox="0 0 11 11" style="margin-left:4px;vertical-align:-1px"><circle cx="5.5" cy="5.5" r="4.8" fill="none" stroke="#888" stroke-width="0.9"/><rect x="5" y="4.5" width="1" height="3.8" fill="#888"/><rect x="5" y="2.6" width="1" height="1" fill="#888"/></svg></div>
<svg class="a" style="left:1731.0px;top:658.0px;" width="4" height="16" viewBox="0 0 4 16"><circle cx="2" cy="3.7" r="1.7" fill="#13999a"/><circle cx="2" cy="8.2" r="1.7" fill="#13999a"/><circle cx="2" cy="12.7" r="1.7" fill="#13999a"/></svg>
<svg class="a" style="left:148.5px;top:663.0px;" width="9" height="6" viewBox="0 0 9 6"><path d="M1 1 L4.5 4.5 L8 1" fill="none" stroke="#13999a" stroke-width="1.5"/></svg>
<div class="a" style="left:33.0px;top:726.3px;width:1743.3px;height:1.0px;background:#e8e8e8"></div>
<div class="t" style="left:43.3px;top:701px;font-size:13.35px;color:#333;">9/17/2025 6:38:00 AM</div>
<div class="t" style="left:258.5px;top:701px;font-size:13.15px;color:#333;">admindroid-demo</div>
<div class="t" style="left:465.5px;top:701px;font-size:13.15px;color:#333;">DomainDnsZones.demo.admindroid.local/...</div>
<div class="t" style="left:764.0px;top:701px;font-size:13.05px;color:#333;">DNS-Tombstoned</div>
<div class="t" style="left:984.0px;top:702px;font-size:12.4px;color:#333;">FALSE</div>
<div class="t" style="left:1163.0px;top:702px;font-size:12.4px;color:#333;">FALSE</div>
<div class="t" style="left:1347.0px;top:701px;font-size:13.15px;color:#333;">admindroid-demo$</div>
<div class="t" style="left:1567.0px;top:702px;font-size:12.95px;color:#333;">admindroid-demo.demo.adm...</div>
<div class="a" style="left:33.0px;top:761.3px;width:1743.3px;height:1.0px;background:#e8e8e8"></div>
<div class="t" style="left:43.3px;top:736px;font-size:13.35px;color:#333;">9/17/2025 6:38:00 AM</div>
<div class="t" style="left:258.5px;top:736px;font-size:13.15px;color:#333;">admindroid-demo</div>
<div class="t" style="left:465.5px;top:736px;font-size:13.15px;color:#333;">DomainDnsZones.demo.admindroid.local/...</div>
<div class="t" style="left:764.0px;top:737px;font-size:12.65px;color:#333;">Dns-Record</div>
<div class="t" style="left:984.0px;top:737px;font-size:12.8px;color:#333;">&lt;Binary Value&gt;</div>
<div class="t" style="left:1163.0px;top:737px;font-size:12.8px;color:#333;">&lt;Binary Value&gt;</div>
<div class="t" style="left:1347.0px;top:736px;font-size:13.15px;color:#333;">admindroid-demo$</div>
<div class="t" style="left:1567.0px;top:737px;font-size:12.95px;color:#333;">admindroid-demo.demo.adm...</div>
<div class="a" style="left:33.0px;top:796.3px;width:1743.3px;height:1.0px;background:#e8e8e8"></div>
<div class="t" style="left:43.3px;top:771px;font-size:13.35px;color:#333;">9/16/2025 6:37:56 AM</div>
<div class="t" style="left:258.5px;top:771px;font-size:13.15px;color:#333;">admindroid-demo</div>
<div class="t" style="left:465.5px;top:771px;font-size:13.15px;color:#333;">DomainDnsZones.demo.admindroid.local/...</div>
<div class="t" style="left:764.0px;top:772px;font-size:12.65px;color:#333;">Dns-Record</div>
<div class="t" style="left:984.0px;top:772px;font-size:12.8px;color:#333;">&lt;Binary Value&gt;</div>
<div class="t" style="left:1163.0px;top:772px;font-size:12.8px;color:#333;">&lt;Binary Value&gt;</div>
<div class="t" style="left:1347.0px;top:771px;font-size:13.15px;color:#333;">admindroid-demo$</div>
<div class="t" style="left:1567.0px;top:772px;font-size:12.95px;color:#333;">admindroid-demo.demo.adm...</div>
<div class="a" style="left:33.0px;top:831.3px;width:1743.3px;height:1.0px;background:#e8e8e8"></div>
<div class="t" style="left:43.3px;top:806px;font-size:13.35px;color:#333;">9/16/2025 6:37:56 AM</div>
<div class="t" style="left:258.5px;top:806px;font-size:13.15px;color:#333;">admindroid-demo</div>
<div class="t" style="left:465.5px;top:806px;font-size:13.15px;color:#333;">DomainDnsZones.demo.admindroid.local/...</div>
<div class="t" style="left:764.0px;top:806px;font-size:13.05px;color:#333;">DNS-Tombstoned</div>
<div class="t" style="left:984.0px;top:807px;font-size:12.4px;color:#333;">FALSE</div>
<div class="t" style="left:1163.0px;top:807px;font-size:12.4px;color:#333;">FALSE</div>
<div class="t" style="left:1347.0px;top:806px;font-size:13.15px;color:#333;">admindroid-demo$</div>
<div class="t" style="left:1567.0px;top:807px;font-size:12.95px;color:#333;">admindroid-demo.demo.adm...</div>
<div class="a" style="left:33.0px;top:866.3px;width:1743.3px;height:1.0px;background:#e8e8e8"></div>
<div class="t" style="left:43.3px;top:841px;font-size:13.35px;color:#333;">9/15/2025 6:37:56 AM</div>
<div class="t" style="left:258.5px;top:841px;font-size:13.15px;color:#333;">admindroid-demo</div>
<div class="t" style="left:465.5px;top:841px;font-size:13.15px;color:#333;">DomainDnsZones.demo.admindroid.local/...</div>
<div class="t" style="left:764.0px;top:842px;font-size:12.65px;color:#333;">Dns-Record</div>
<div class="t" style="left:984.0px;top:842px;font-size:12.8px;color:#333;">&lt;Binary Value&gt;</div>
<div class="t" style="left:1163.0px;top:842px;font-size:12.8px;color:#333;">&lt;Binary Value&gt;</div>
<div class="t" style="left:1347.0px;top:841px;font-size:13.15px;color:#333;">admindroid-demo$</div>
<div class="t" style="left:1567.0px;top:842px;font-size:12.95px;color:#333;">admindroid-demo.demo.adm...</div>
<div class="a" style="left:33.0px;top:901.3px;width:1743.3px;height:1.0px;background:#e8e8e8"></div>
<div class="t" style="left:43.3px;top:876px;font-size:13.35px;color:#333;">9/15/2025 6:37:56 AM</div>
<div class="t" style="left:258.5px;top:876px;font-size:13.15px;color:#333;">admindroid-demo</div>
<div class="t" style="left:465.5px;top:876px;font-size:13.15px;color:#333;">DomainDnsZones.demo.admindroid.local/...</div>
<div class="t" style="left:764.0px;top:876px;font-size:13.05px;color:#333;">DNS-Tombstoned</div>
<div class="t" style="left:984.0px;top:877px;font-size:12.4px;color:#333;">FALSE</div>
<div class="t" style="left:1163.0px;top:877px;font-size:12.4px;color:#333;">FALSE</div>
<div class="t" style="left:1347.0px;top:876px;font-size:13.15px;color:#333;">admindroid-demo$</div>
<div class="t" style="left:1567.0px;top:877px;font-size:12.95px;color:#333;">admindroid-demo.demo.adm...</div>
<div class="a" style="left:33.0px;top:936.3px;width:1743.3px;height:1.0px;background:#e8e8e8"></div>
<div class="t" style="left:43.3px;top:911px;font-size:13.35px;color:#333;">9/14/2025 6:37:53 AM</div>
<div class="t" style="left:258.5px;top:911px;font-size:13.15px;color:#333;">admindroid-demo</div>
<div class="t" style="left:465.5px;top:911px;font-size:13.15px;color:#333;">DomainDnsZones.demo.admindroid.local/...</div>
<div class="t" style="left:764.0px;top:911px;font-size:13.05px;color:#333;">DNS-Tombstoned</div>
<div class="t" style="left:984.0px;top:912px;font-size:12.4px;color:#333;">FALSE</div>
<div class="t" style="left:1163.0px;top:912px;font-size:12.4px;color:#333;">FALSE</div>
<div class="t" style="left:1347.0px;top:911px;font-size:13.15px;color:#333;">admindroid-demo$</div>
<div class="t" style="left:1567.0px;top:912px;font-size:12.95px;color:#333;">admindroid-demo.demo.adm...</div>
<div class="a" style="left:33.0px;top:971.3px;width:1743.3px;height:1.0px;background:#e8e8e8"></div>
<div class="t" style="left:43.3px;top:946px;font-size:13.35px;color:#333;">9/14/2025 6:37:53 AM</div>
<div class="t" style="left:258.5px;top:946px;font-size:13.15px;color:#333;">admindroid-demo</div>
<div class="t" style="left:465.5px;top:946px;font-size:13.15px;color:#333;">DomainDnsZones.demo.admindroid.local/...</div>
<div class="t" style="left:764.0px;top:947px;font-size:12.65px;color:#333;">Dns-Record</div>
<div class="t" style="left:984.0px;top:947px;font-size:12.8px;color:#333;">&lt;Binary Value&gt;</div>
<div class="t" style="left:1163.0px;top:947px;font-size:12.8px;color:#333;">&lt;Binary Value&gt;</div>
<div class="t" style="left:1347.0px;top:946px;font-size:13.15px;color:#333;">admindroid-demo$</div>
<div class="t" style="left:1567.0px;top:947px;font-size:12.95px;color:#333;">admindroid-demo.demo.adm...</div>
<div class="t" style="left:43.3px;top:981px;font-size:13.35px;color:#333;">9/13/2025 6:37:49 AM</div>
<div class="t" style="left:258.5px;top:981px;font-size:13.15px;color:#333;">admindroid-demo</div>
<div class="t" style="left:465.5px;top:981px;font-size:13.15px;color:#333;">DomainDnsZones.demo.admindroid.local/...</div>
<div class="t" style="left:764.0px;top:981px;font-size:13.05px;color:#333;">DNS-Tombstoned</div>
<div class="t" style="left:984.0px;top:982px;font-size:12.4px;color:#333;">FALSE</div>
<div class="t" style="left:1163.0px;top:982px;font-size:12.4px;color:#333;">FALSE</div>
<div class="t" style="left:1347.0px;top:981px;font-size:13.15px;color:#333;">admindroid-demo$</div>
<div class="t" style="left:1567.0px;top:982px;font-size:12.95px;color:#333;">admindroid-demo.demo.adm...</div>
<div class="a" style="left:248.0px;top:649.0px;width:1.0px;height:41.3px;border-left:1px dotted #c6d2dc;box-sizing:border-box"></div>
<div class="a" style="left:248.0px;top:690.3px;width:4.0px;height:302.7px;background:linear-gradient(90deg,#e6e6e6,rgba(255,255,255,0))"></div>
<div class="a" style="left:1745px;top:648.3px;width:51.5px;height:44.5px;background:#fff;border-radius:22px 0 0 22px;box-shadow:1px 2px 3px rgba(0,0,0,0.18)"></div>
<svg class="a" style="left:1759.0px;top:655.0px;" width="28" height="26" viewBox="0 0 28 26"><g fill="none" stroke="#777" stroke-width="1.7"><path d="M14 23.2 H1.5 V1.5 H24.5 V13"/><path d="M1.5 7 H24.5 M8.5 7 V23 M18 7 V13" /></g><rect x="2" y="2" width="22" height="4.5" fill="#fff" stroke="none"/><path d="M1.5 1.5 H24.5 V7 H1.5 Z" fill="none" stroke="#777" stroke-width="1.7"/><g fill="#777"><circle cx="20.5" cy="19.5" r="3.6"/><rect x="19.5" y="14" width="2" height="2.8" transform="rotate(0 20.5 19.5)"/><rect x="19.5" y="14" width="2" height="2.8" transform="rotate(45 20.5 19.5)"/><rect x="19.5" y="14" width="2" height="2.8" transform="rotate(90 20.5 19.5)"/><rect x="19.5" y="14" width="2" height="2.8" transform="rotate(135 20.5 19.5)"/><rect x="19.5" y="14" width="2" height="2.8" transform="rotate(180 20.5 19.5)"/><rect x="19.5" y="14" width="2" height="2.8" transform="rotate(225 20.5 19.5)"/><rect x="19.5" y="14" width="2" height="2.8" transform="rotate(270 20.5 19.5)"/><rect x="19.5" y="14" width="2" height="2.8" transform="rotate(315 20.5 19.5)"/></g><circle cx="20.5" cy="19.5" r="1.5" fill="#fff"/></svg>
<div class="a" style="left:33.0px;top:993.0px;width:1743.3px;height:45.0px;background:#e4f1f8"></div>
<div class="a" style="left:1233.4px;top:1001.4px;width:139.9px;height:27.8px;background:#fff;border:1px solid #dde6ea;border-radius:14px;box-sizing:border-box"></div>
<div class="t" style="left:1244.0px;top:1012px;font-size:10.0px;color:#666;">Go to Page :</div>
<div class="a" style="left:1304.0px;top:1023.8px;width:39.6px;height:1.0px;background:#cfcfcf"></div>
<div class="t" style="left:1023.6px;width:600px;text-align:center;top:1010px;font-size:12.5px;color:#555;">1</div>
<div class="a" style="left:1349px;top:1005px;width:21.2px;height:21.2px;border-radius:50%;background:#ececec"></div>
<svg class="a" style="left:1354.0px;top:1010.0px;" width="12" height="9" viewBox="0 0 12 9"><path d="M10.5 0.5 V4.5 H2" fill="none" stroke="#888" stroke-width="1.1"/><path d="M4.5 1.8 L1.3 4.5 L4.5 7.2" fill="none" stroke="#888" stroke-width="1.1"/></svg>
<div class="a" style="left:1382.4px;top:1001.4px;width:105.0px;height:27.8px;background:#fff;border:1px solid #dde6ea;border-radius:14px;box-sizing:border-box"></div>
<div class="t" style="left:1393.0px;top:1012px;font-size:9.5px;color:#666;">Page Size :</div>
<div class="t" style="left:1447.8px;top:1011px;font-size:12.8px;color:#444;">20</div>
<svg class="a" style="left:1468.0px;top:1013.0px;" width="9" height="5" viewBox="0 0 9 5"><path d="M0 0 H9 L4.5 4.5 Z" fill="#777"/></svg>
<div class="t" style="left:1496.4px;top:1013px;font-size:12.9px;color:#555;">Showing 1 - 20 of</div>
<div class="t" style="left:1602.0px;top:1007px;font-size:19.4px;color:#555;">158</div>
<div class="t" style="left:1638.9px;top:1011px;font-size:14.35px;color:#555;">DNS nodes</div>
<div class="a" style="left:1718.4px;top:1003.4px;width:47.7px;height:25.1px;background:#fff;border:1px solid #e3e8ea;border-radius:13px;box-sizing:border-box"></div>
<svg class="a" style="left:1728.0px;top:1010.5px;" width="6" height="11" viewBox="0 0 6 11"><path d="M5.5 0 V10.5 L0 5.25 Z" fill="#d0d0d0"/></svg>
<svg class="a" style="left:1751.0px;top:1010.5px;" width="6" height="11" viewBox="0 0 6 11"><path d="M0 0 V10.5 L5.5 5.25 Z" fill="#666"/></svg>
<svg class="a" style="left:133.0px;top:497.0px;" width="16" height="23" viewBox="0 0 16 23"><path d="M2.5 2.5 V18.5 L6.7 14.8 L9.5 20.5 L11.5 19.7 L9 13.8 H13.8 Z" fill="#fff" stroke="#111" stroke-width="1.1" stroke-linejoin="round"/></svg></body></html>
